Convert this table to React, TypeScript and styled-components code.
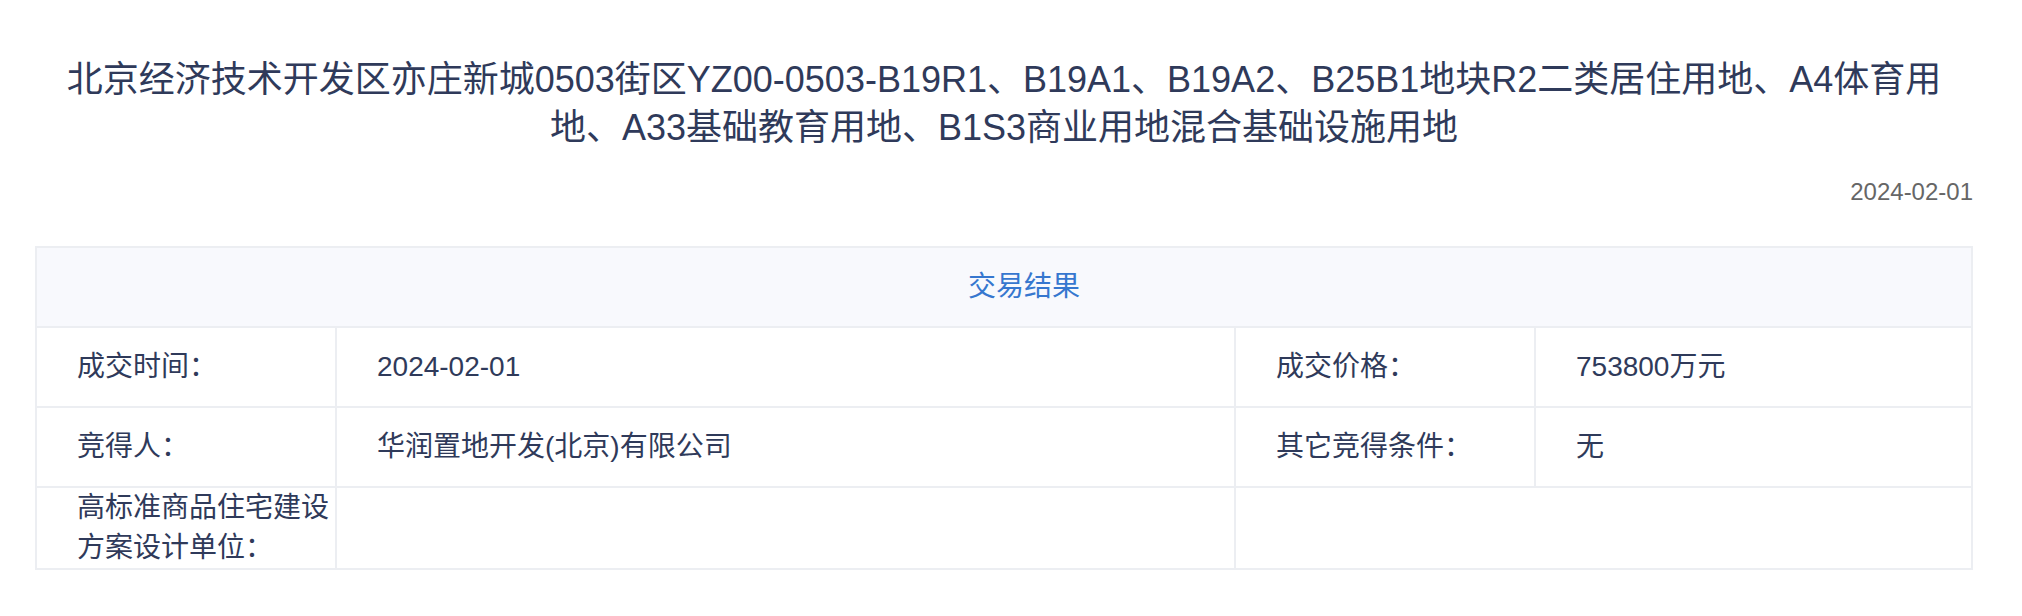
import React from 'react';
import styled, { createGlobalStyle } from 'styled-components';

const GlobalStyle = createGlobalStyle`
  body {
    margin: 0;
    background: #fff;
    font-family: 'Liberation Sans', 'Noto Sans CJK SC', sans-serif;
  }
`;

const Page = styled.div`
  width: 1938px;
  margin-left: 35px;
  padding-top: 56px;
  color: #2f3a5a;
`;

const Title = styled.h1`
  margin: 0;
  font-size: 36px;
  line-height: 48px;
  font-weight: 400;
  text-align: center;
  color: #2f3a5a;
`;

const DateLine = styled.div`
  margin-top: 22px;
  font-size: 24px;
  line-height: 36px;
  text-align: right;
  color: #666;
`;

const Table = styled.table`
  margin-top: 36px;
  width: 1938px;
  border-collapse: collapse;
  table-layout: fixed;
  border: 2px solid #eceef2;
  font-size: 28px;
  line-height: 40px;
`;

const HeadCell = styled.th`
  height: 78px;
  padding: 0 0 0 40px;
  background: #f8f9fd;
  border: 2px solid #eceef2;
  color: #3677cf;
  font-weight: 400;
  text-align: center;
`;

const Cell = styled.td<{ $label?: boolean }>`
  height: 78px;
  padding: 0 ${(p) => (p.$label ? '4px' : '40px')} 0 40px;
  border: 2px solid #eceef2;
  color: #2f3a5a;
  vertical-align: middle;
`;

interface IRow {
  label: string;
  value: string;
  label2?: string;
  value2?: string;
}

const rows: IRow[] = [
  { label: '成交时间：', value: '2024-02-01', label2: '成交价格：', value2: '753800万元' },
  { label: '竞得人：', value: '华润置地开发(北京)有限公司', label2: '其它竞得条件：', value2: '无' },
  { label: '高标准商品住宅建设方案设计单位：', value: '' },
];

const App: React.FC = () => {
  return (
    <Page>
      <GlobalStyle />
      <Title>
        北京经济技术开发区亦庄新城0503街区YZ00-0503-B19R1、B19A1、B19A2、B25B1地块R2二类居住用地、A4体育用地、A33基础教育用地、B1S3商业用地混合基础设施用地
      </Title>
      <DateLine>2024-02-01</DateLine>
      <Table>
        <colgroup>
          <col style={{ width: 300 }} />
          <col style={{ width: 899 }} />
          <col style={{ width: 300 }} />
          <col />
        </colgroup>
        <thead>
          <tr>
            <HeadCell colSpan={4}>交易结果</HeadCell>
          </tr>
        </thead>
        <tbody>
          {rows.map((row) => (
            <tr key={row.label}>
              <Cell $label>{row.label}</Cell>
              <Cell>{row.value}</Cell>
              {row.label2 ? (
                <>
                  <Cell $label>{row.label2}</Cell>
                  <Cell>{row.value2}</Cell>
                </>
              ) : (
                <Cell colSpan={2}></Cell>
              )}
            </tr>
          ))}
        </tbody>
      </Table>
    </Page>
  );
};

export default App;
